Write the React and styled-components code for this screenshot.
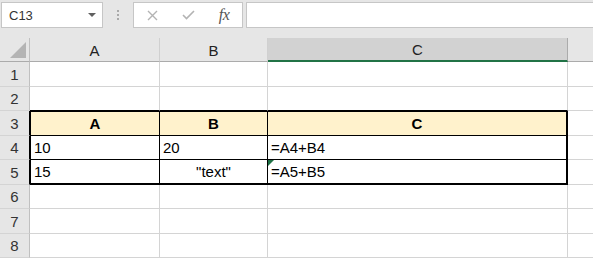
import React from "react"
import styled, { createGlobalStyle, css } from "styled-components"

const GlobalStyle = createGlobalStyle`
  html, body {
    margin: 0;
    padding: 0;
    background: #ffffff;
  }
  body {
    font-family: "Liberation Sans", Arial, sans-serif;
  }
`;

const Page = styled.div`
  width: 593px;
  height: 258px;
  overflow: hidden;
  background: #e6e6e6;
`;

const Toolbar = styled.div`
  display: flex;
  align-items: flex-start;
  height: 38px;
  box-sizing: border-box;
  padding: 2px 0 0 1px;
`;

const NameBox = styled.div`
  box-sizing: border-box;
  width: 102px;
  height: 26px;
  background: #fff;
  border: 1px solid #c6c6c6;
  display: flex;
  align-items: center;
  justify-content: space-between;
  padding: 0 6px 0 7px;
  font-size: 13px;
  color: #333;
`;

const Grip = styled.div`
  width: 30px;
  height: 26px;
  display: flex;
  flex-direction: column;
  align-items: center;
  justify-content: center;
  gap: 2px;
  span {
    width: 2px;
    height: 2px;
    background: #a9a9a9;
  }
`;

const ButtonGroup = styled.div`
  box-sizing: border-box;
  width: 110px;
  height: 26px;
  background: #fff;
  border: 1px solid #c6c6c6;
  display: flex;
`;

const IconSlot = styled.div`
  width: 36px;
  display: flex;
  align-items: center;
  justify-content: center;
`;

const Fx = styled.span`
  font-family: "Liberation Serif", "Times New Roman", serif;
  font-style: italic;
  font-size: 16px;
  color: #555;
  letter-spacing: -0.5px;
`;

const FormulaInput = styled.div`
  box-sizing: border-box;
  flex: 1;
  height: 26px;
  margin-left: 3px;
  background: #fff;
  border: 1px solid #c6c6c6;
  border-right: none;
`;

const Sheet = styled.div`
  display: grid;
  grid-template-columns: 30px 130px 108px 300px 100px;
  grid-template-rows: 24px repeat(8, 24.5px);
  background: #fff;
  font-size: 15px;
`;

const Corner = styled.div`
  box-sizing: border-box;
  background: #e6e6e6;
  border-right: 1px solid #c0c0c0;
  border-bottom: 1px solid #ababab;
  display: flex;
  align-items: flex-end;
  justify-content: flex-end;
  padding: 0 3px 3px 0;
`;

const ColHeader = styled.div`
  box-sizing: border-box;
  display: flex;
  align-items: center;
  justify-content: center;
  padding-top: 1px;
  color: #222;
  background: ${p => (p.$selected ? "#d2d2d2" : "#e6e6e6")};
  border-right: 1px solid ${p => (p.$selected ? "#ababab" : "#d0d0d0")};
  border-bottom: ${p => (p.$selected ? "2px solid #217346" : "1px solid #ababab")};
`;

const RowHeader = styled.div`
  box-sizing: border-box;
  display: flex;
  align-items: center;
  justify-content: center;
  padding-top: 1px;
  color: #333;
  background: #e6e6e6;
  border-right: 1px solid ${p => (p.$inTable ? "#000" : "#c0c0c0")};
  border-bottom: 1px solid #d4d4d4;
`;

const Cell = styled.div`
  position: relative;
  box-sizing: border-box;
  display: flex;
  align-items: center;
  justify-content: ${p => p.$align || "flex-start"};
  padding: 1px 3px 0;
  white-space: nowrap;
  overflow: hidden;
  color: #000;
  font-weight: ${p => (p.$bold ? 700 : 400)};
  background: ${p => p.$bg || "#fff"};
  border-right: 1px solid #d4d4d4;
  border-bottom: 1px solid #d4d4d4;
  ${p => p.$first && css`padding-left: 4px;`}
  ${p => p.$above && css`border-bottom-color: #000;`}
  ${p => p.$table && css`
    border-right-color: #000;
    border-bottom-color: #000;
  `}
  ${p => p.$last && css`border-right-width: 2px;`}
  ${p => p.$bottom && css`border-bottom-width: 2px;`}
  box-shadow: ${p => {
    const s = [];
    if (p.$table && p.$first) s.push("inset 1px 0 0 #000");
    if (p.$table && p.$top) s.push("inset 0 1px 0 #000");
    return s.length ? s.join(", ") : "none";
  }};
  ${p => p.$flag && css`
    &::before {
      content: "";
      position: absolute;
      left: 0;
      top: 0;
      border-top: 6px solid #1e7145;
      border-right: 6px solid transparent;
    }
  `}
`;

const columns = ["A", "B", "C", "D"];

const data = {
  3: [
    { v: "A", bold: true, align: "center" },
    { v: "B", bold: true, align: "center" },
    { v: "C", bold: true, align: "center" },
  ],
  4: [{ v: "10" }, { v: "20" }, { v: "=A4+B4" }],
  5: [{ v: "15" }, { v: '"text"', align: "center" }, { v: "=A5+B5", flag: true }],
};

const CloseIcon = () => (
  <svg width="11" height="11" viewBox="0 0 11 11">
    <path d="M1 1 L10 10 M10 1 L1 10" stroke="#b3b3b3" strokeWidth="1.4" fill="none" />
  </svg>
);

const CheckIcon = () => (
  <svg width="13" height="10" viewBox="0 0 13 10">
    <path d="M1 5 L4.5 8.5 L12 1" stroke="#b3b3b3" strokeWidth="1.6" fill="none" />
  </svg>
);

const DropArrow = () => (
  <svg width="8" height="4" viewBox="0 0 8 4">
    <path d="M0 0 H8 L4 4 Z" fill="#606060" />
  </svg>
);

const SelectAll = () => (
  <svg width="16" height="16" viewBox="0 0 16 16">
    <path d="M16 0 V16 H0 Z" fill="#b4b4b4" />
  </svg>
);

export default function App() {
  const rows = [1, 2, 3, 4, 5, 6, 7, 8];
  return (
    <>
      <GlobalStyle />
      <Page>
        <Toolbar>
          <NameBox>
            <span>C13</span>
            <DropArrow />
          </NameBox>
          <Grip>
            <span />
            <span />
            <span />
          </Grip>
          <ButtonGroup>
            <IconSlot><CloseIcon /></IconSlot>
            <IconSlot><CheckIcon /></IconSlot>
            <IconSlot><Fx>fx</Fx></IconSlot>
          </ButtonGroup>
          <FormulaInput />
        </Toolbar>
        <Sheet>
          <Corner><SelectAll /></Corner>
          {columns.map(c => (
            <ColHeader key={c} $selected={c === "C"}>{c === "D" ? "" : c}</ColHeader>
          ))}
          {rows.map(r => (
            <React.Fragment key={r}>
              <RowHeader $inTable={r >= 3 && r <= 5}>{r}</RowHeader>
              {columns.map((c, i) => {
                const inTable = r >= 3 && r <= 5 && i < 3;
                const cell = (data[r] && data[r][i]) || {};
                return (
                  <Cell
                    key={c}
                    $table={inTable}
                    $first={i === 0}
                    $last={inTable && i === 2}
                    $top={inTable && r === 3}
                    $bottom={inTable && r === 5}
                    $above={r === 2 && i < 3}
                    $bg={r === 3 && i < 3 ? "#fff2cc" : undefined}
                    $bold={cell.bold}
                    $align={cell.align}
                    $flag={cell.flag}
                  >
                    {cell.v}
                  </Cell>
                );
              })}
            </React.Fragment>
          ))}
        </Sheet>
      </Page>
    </>
  );
}
